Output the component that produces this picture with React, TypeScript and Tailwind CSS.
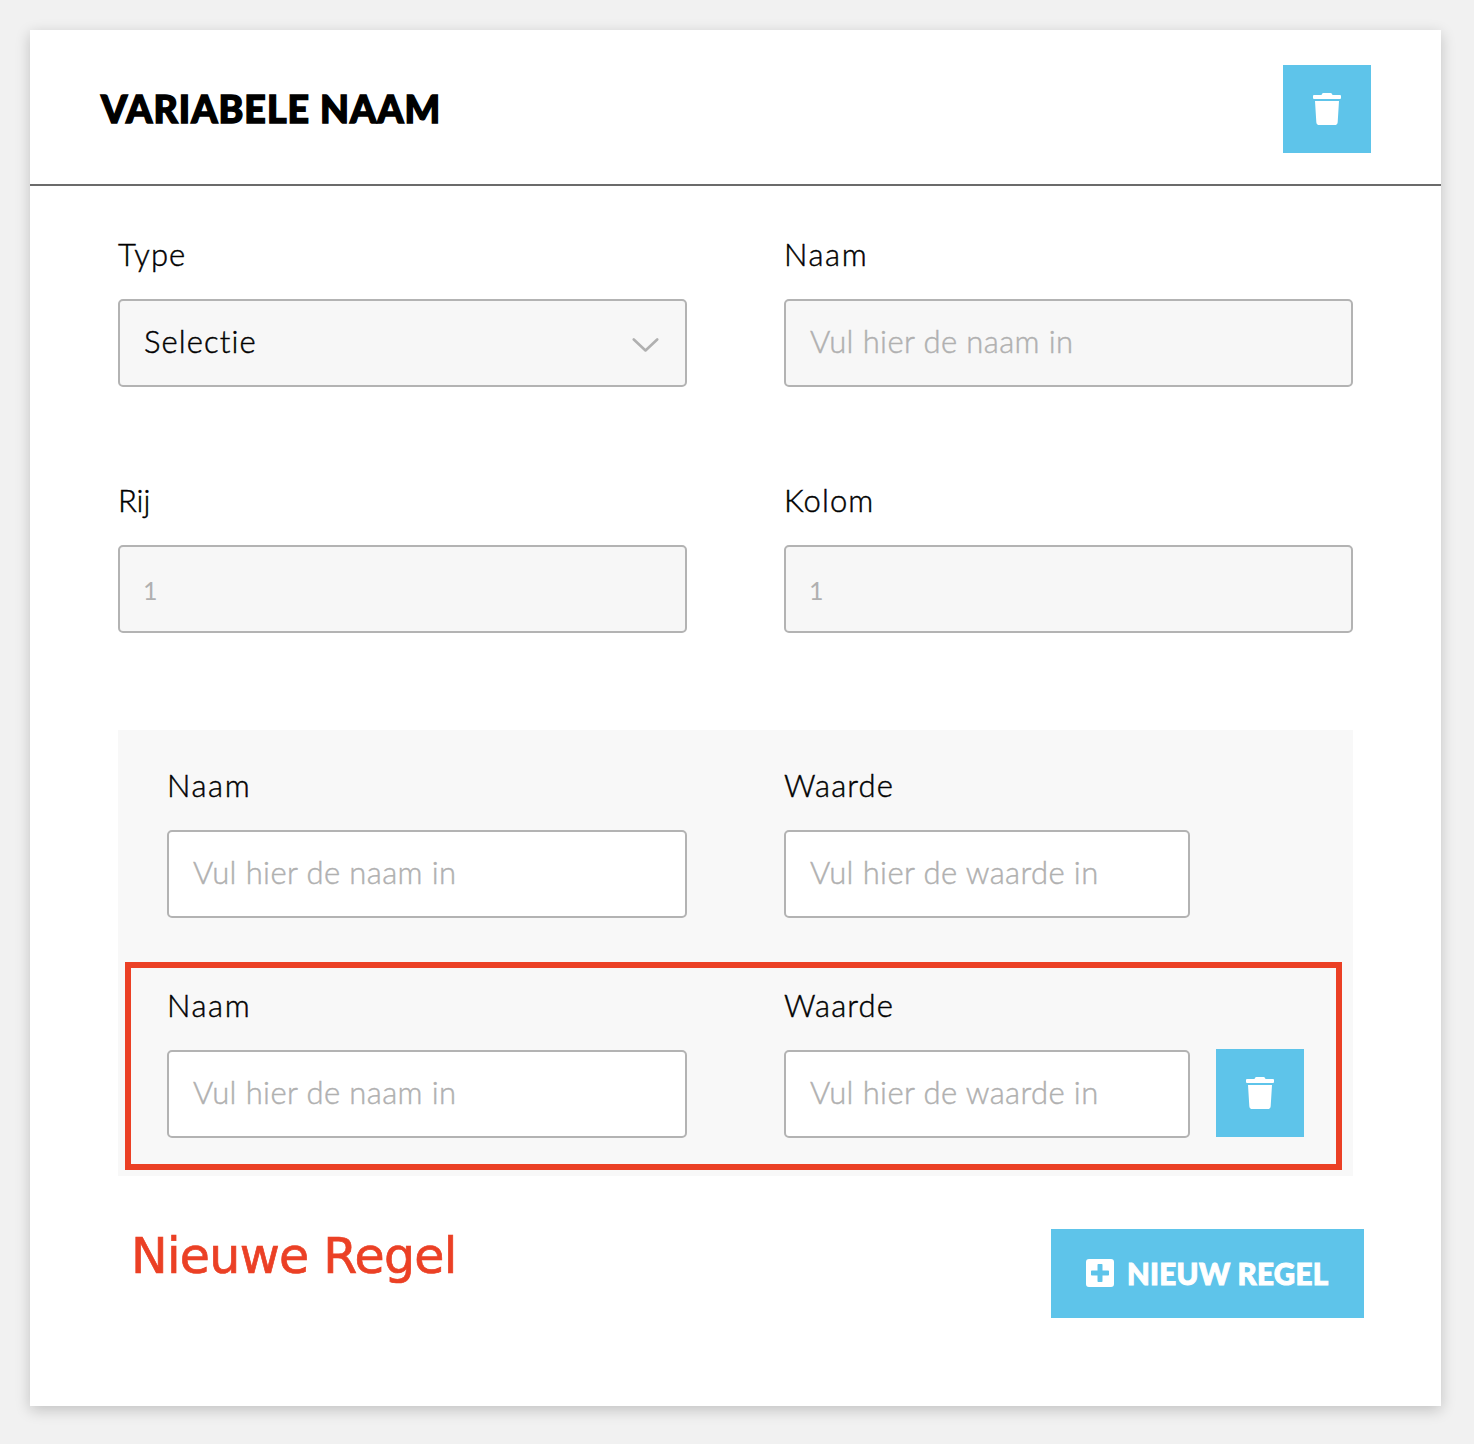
import React from "react";

function Field({ text, tracking = "tracking-[1.1px]", children, className = "" }: { text: string; tracking?: string; children: React.ReactNode; className?: string }) {
  return (
    <div className={className}>
      <span className={"block text-[31px] leading-[36px] font-light whitespace-nowrap text-black [-webkit-text-stroke:0.450px_black] " + tracking}>{text}</span>
      <div className="mt-[27px]">{children}</div>
    </div>
  );
}

function Box({ value, white, dark, small, children }: { value: string; white?: boolean; dark?: boolean; small?: boolean; children?: React.ReactNode }) {
  return (
    <div
      className={
        "flex h-[88px] items-center justify-between rounded-[5px] border-2 border-[#b3b3b3] pr-[26px] pl-[24px] " +
        (white ? "bg-white " : "bg-[#f7f7f7] ") +
        (dark ? "text-black" : "text-[#b0b0b0]")
      }
    >
      <span
        className={
          small
            ? "-ml-px pt-[3px] text-[25px] leading-[36px] font-normal"
            : "-mt-[3px] text-[31px] leading-[36px] font-light whitespace-nowrap " +
              (dark ? "tracking-[1.1px] [-webkit-text-stroke:0.450px_black]" : "tracking-[0.4px] [-webkit-text-stroke:0.450px_#b0b0b0]")
        }
      >
        {value}
      </span>
      {children}
    </div>
  );
}

function TrashButton() {
  return (
    <button className="flex size-[88px] shrink-0 items-center justify-center bg-[#5ec4ea]">
      <svg width="28" height="32" viewBox="0 0 448 512" fill="white">
        <path d="M432 32H312l-9.400-18.700A24 24 0 0 0 281.100 0H166.800a23.720 23.720 0 0 0-21.400 13.300L136 32H16A16 16 0 0 0 0 48v32a16 16 0 0 0 16 16h416a16 16 0 0 0 16-16V48a16 16 0 0 0-16-16zM32 128l21.200 339a48 48 0 0 0 47.900 45h245.800a48 48 0 0 0 47.900-45L416 128z" />
      </svg>
    </button>
  );
}

export default function App() {
  return (
    <div className="h-[1444px] w-[1474px] bg-[#f1f1f1] pt-[30px] pl-[30px] font-['Lato',sans-serif]">
      <div className="h-[1376px] w-[1411px] bg-white shadow-[0_4px_14px_rgba(0,0,0,0.2)]">
        <header className="flex h-[155.500px] items-start justify-between border-b-2 border-[#6b6b6b] pt-[35px] pr-[70px] pl-[71px]">
          <h1 className="pt-[20px] text-[37.500px] leading-[48px] font-black tracking-[1px] whitespace-nowrap text-black [-webkit-text-stroke:1.400px_black]">VARIABELE NAAM</h1>
          <TrashButton />
        </header>

        <div className="grid grid-cols-2 gap-x-[97px] gap-y-[95px] px-[88px] pt-[50px]">
          <Field text="Type">
            <Box value="Selectie" dark>
              <svg width="27" height="14" viewBox="0 0 27 14" fill="none" stroke="#b0b0b0" strokeWidth="2.600" strokeLinecap="round" strokeLinejoin="round" className="mt-[4px]">
                <path d="M1.800 1.500 13.500 12.500 25.200 1.500" />
              </svg>
            </Box>
          </Field>
          <Field text="Naam" tracking="tracking-[1.6px]">
            <Box value="Vul hier de naam in" />
          </Field>
          <Field text="Rij" tracking="tracking-normal">
            <Box value="1" small />
          </Field>
          <Field text="Kolom">
            <Box value="1" small />
          </Field>
        </div>

        <section className="mx-[88px] mt-[97px] h-[446px] bg-[#f8f8f8] pt-[37px]">
          <div className="flex pl-[49px]">
            <Field text="Naam" tracking="tracking-[1.6px]" className="w-[520px]">
              <Box value="Vul hier de naam in" white />
            </Field>
            <Field text="Waarde" className="ml-[97px] w-[406px]">
              <Box value="Vul hier de waarde in" white />
            </Field>
          </div>
          <div className="mt-[44px] ml-[7px] flex h-[208px] w-[1217px] items-start border-[6px] border-[#eb4025] pt-[19px] pl-[36px]">
            <Field text="Naam" tracking="tracking-[1.6px]" className="w-[520px]">
              <Box value="Vul hier de naam in" white />
            </Field>
            <Field text="Waarde" className="ml-[97px] w-[406px]">
              <Box value="Vul hier de waarde in" white />
            </Field>
            <div className="mt-[62px] ml-[26px]">
              <TrashButton />
            </div>
          </div>
        </section>

        <div className="flex items-start justify-between pt-[53px] pr-[77px] pl-[101px]">
          <p className="font-['DejaVu_Sans',sans-serif] text-[49px] leading-[56px] tracking-[-0.7px] whitespace-nowrap text-[#eb4025] [-webkit-text-stroke:0.700px_#eb4025]">Nieuwe Regel</p>
          <button className="flex h-[89px] w-[313px] items-start bg-[#5ec4ea] pt-[30px] pl-[35px] text-white">
            <svg width="28" height="28" viewBox="0 0 28 28" fill="white">
              <path fillRule="evenodd" d="M3 0h22a3 3 0 0 1 3 3v22a3 3 0 0 1-3 3H3a3 3 0 0 1-3-3V3a3 3 0 0 1 3-3zM12.300 5a.8.8 0 0 0-.8.8v5.700H5.800a.8.8 0 0 0-.8.800v3.400c0 .450.350.8.8.8h5.700v5.700c0 .450.350.8.8.8h3.400a.8.8 0 0 0 .8-.8v-5.700h5.700a.8.8 0 0 0 .8-.8v-3.400a.8.8 0 0 0-.8-.8h-5.700V5.800a.8.8 0 0 0-.8-.8z" />
            </svg>
            <span className="-mt-[3px] ml-[13px] text-[29.500px] leading-[36px] font-black tracking-[0.3px] whitespace-nowrap [-webkit-text-stroke:1px_white]">NIEUW REGEL</span>
          </button>
        </div>
      </div>
    </div>
  );
}
